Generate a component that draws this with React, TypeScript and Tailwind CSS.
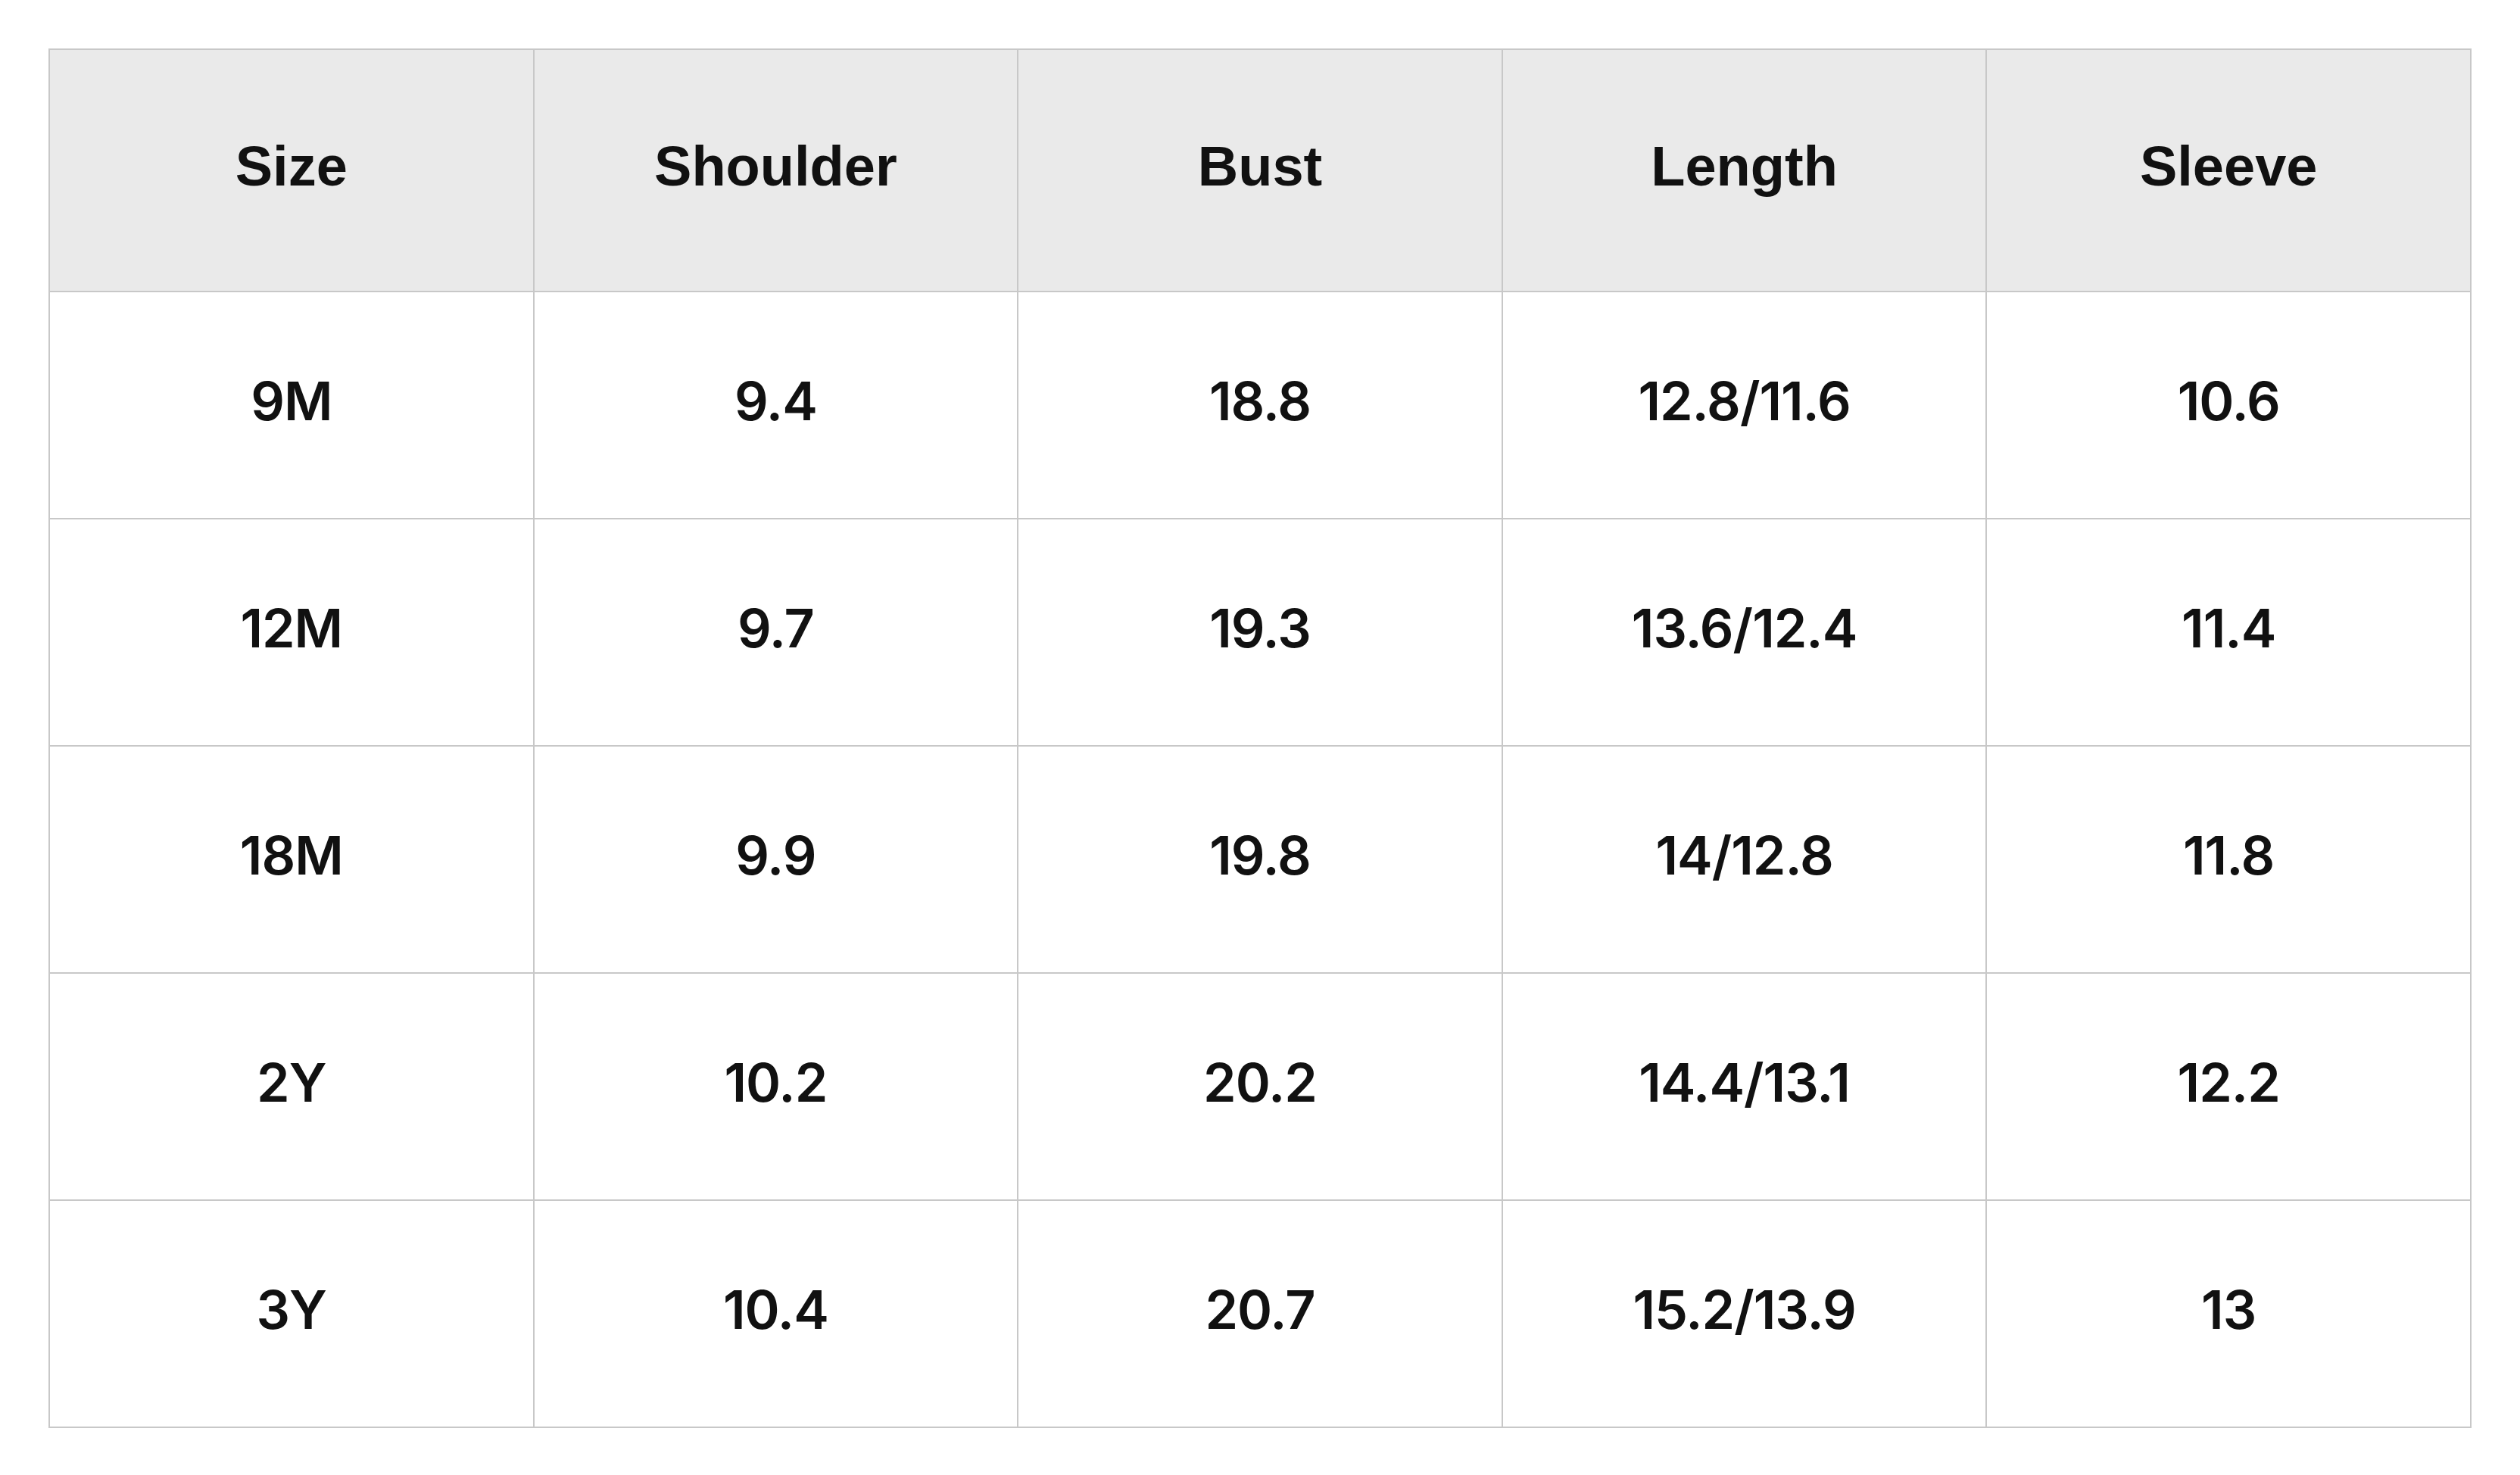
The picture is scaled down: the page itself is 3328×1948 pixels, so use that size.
const headers = ['Size', 'Shoulder', 'Bust', 'Length', 'Sleeve'];

const rows = [
  ['9M', '9.4', '18.8', '12.8/11.6', '10.6'],
  ['12M', '9.7', '19.3', '13.6/12.4', '11.4'],
  ['18M', '9.9', '19.8', '14/12.8', '11.8'],
  ['2Y', '10.2', '20.2', '14.4/13.1', '12.2'],
  ['3Y', '10.4', '20.7', '15.2/13.9', '13'],
];

function SizeChart() {
  return (
    <table className="w-[3200px] table-fixed border-collapse border-2 border-[#c8c8c8]">
      <thead>
        <tr className="h-[320px] bg-[#eaeaea]">
          {headers.map((h) => (
            <th
              key={h}
              className="border-2 border-[#c8c8c8] pb-[12px] text-center align-middle text-[74px] font-bold text-[#111111] font-['Liberation_Sans',Arial,sans-serif]"
            >
              {h}
            </th>
          ))}
        </tr>
      </thead>
      <tbody>
        {rows.map((row) => (
          <tr key={row[0]} className="h-[300px] bg-white">
            {row.map((cell, i) => (
              <td
                key={i}
                className="border-2 border-[#c8c8c8] pb-[12px] text-center align-middle text-[70px] font-semibold tracking-[-1px] text-[#111111] font-['Inter',sans-serif]"
              >
                {cell}
              </td>
            ))}
          </tr>
        ))}
      </tbody>
    </table>
  );
}

export default function App() {
  return (
    <div className="min-h-screen bg-white p-16">
      <SizeChart />
    </div>
  );
}
